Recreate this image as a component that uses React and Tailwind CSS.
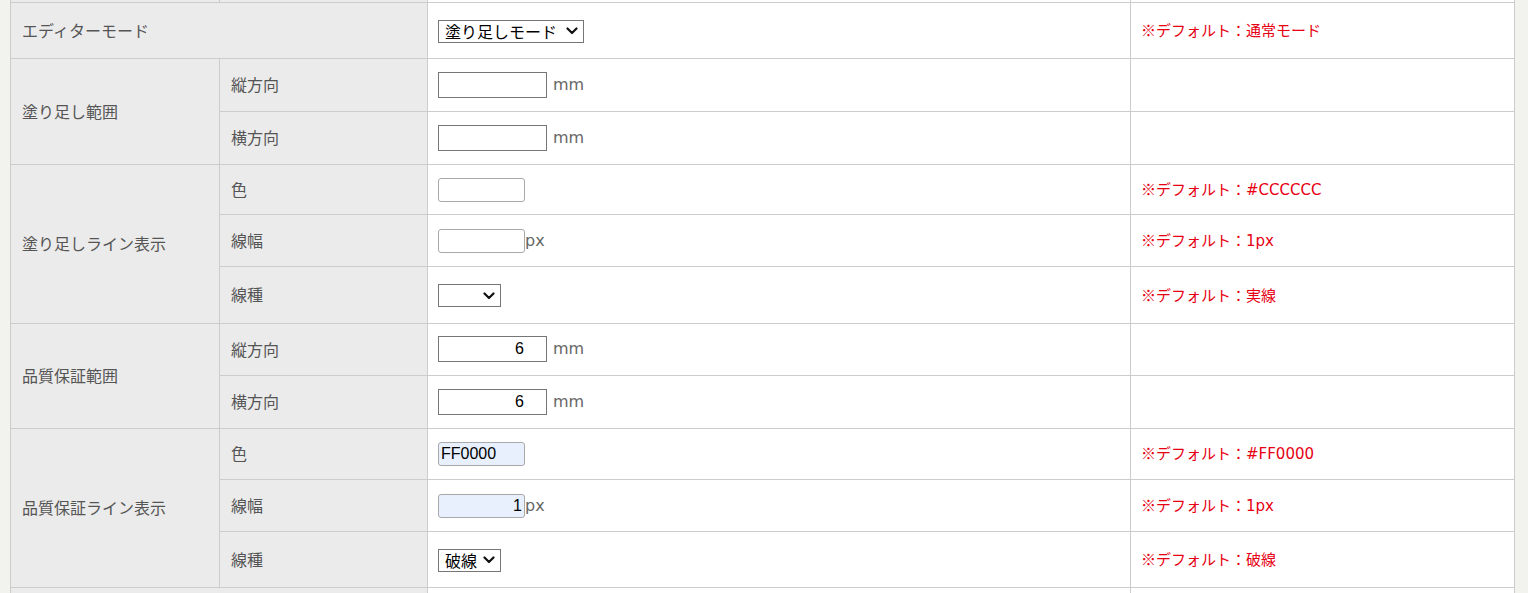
import React from 'react';

const label = 'bg-[#ebebeb] border border-[#cccccc] px-[11px] pb-[2px] text-[16px] text-[#555555] align-middle';
const cell = 'bg-white border border-[#cccccc] pl-[10px] pr-[11px] pb-[2px] align-middle';
const note = 'text-[15px] text-[#e60012]';
const latin = "font-['DejaVu_Sans','Noto_Sans_CJK_JP',sans-serif]";
const arial = "font-['Liberation_Sans',sans-serif]";

const TextBox = ({ value = '', right = false }) => (
  <input
    type="text"
    defaultValue={value}
    className={`w-[109px] h-[26px] border border-[#767676] bg-white text-[16px] text-black px-[3px] align-middle ${arial} ${right ? 'text-right pr-[22px]' : ''}`}
  />
);

const SmallBox = ({ value = '', right = false, filled = false }) => (
  <input
    type="text"
    defaultValue={value}
    className={`w-[87px] h-[24px] border border-[#a9a9a9] rounded-[3px] text-[16px] text-black px-[2px] align-middle ${arial} ${filled ? 'bg-[#e8f0fe]' : 'bg-white'} ${right ? 'text-right' : ''}`}
  />
);

const Chevron = () => (
  <svg width="12" height="8" viewBox="0 0 12 8" className="shrink-0">
    <path d="M1.5 1.5 L6 6 L10.5 1.5" fill="none" stroke="#111111" strokeWidth="2.2" strokeLinecap="round" strokeLinejoin="round" />
  </svg>
);

const Select = ({ value, w }) => (
  <span
    className={`${w} inline-flex items-center justify-between h-[23px] border border-[#767676] bg-white pl-[6px] pr-[5px] text-[16px] leading-[20px] text-black align-middle`}
  >
    <span>{value}</span>
    <Chevron />
  </span>
);

const Unit = ({ children, gap = true }) => (
  <span className={`text-[16px] text-[#666666] align-middle ${latin} ${gap ? 'ml-[6px]' : ''}`}>{children}</span>
);

const Note = ({ value, jp = false }) => (
  <span className={note}>
    ※デフォルト：<span className={jp ? '' : latin}>{value}</span>
  </span>
);

export default function App() {
  return (
    <div className="h-[593px] overflow-hidden bg-[#f2f2ee] pl-[10px] font-['Noto_Sans_CJK_JP',sans-serif]">
      <table className="w-[1504px] border-collapse table-fixed -mt-[30px]">
        <colgroup>
          <col className="w-[209px]" />
          <col className="w-[208px]" />
          <col className="w-[703px]" />
          <col className="w-[384px]" />
        </colgroup>
        <tbody>
          <tr className="h-[32px]">
            <td className={label}></td>
            <td className={label}></td>
            <td className={cell}></td>
            <td className={cell}></td>
          </tr>

          <tr className="h-[56px]">
            <td className={label} colSpan={2}>エディターモード</td>
            <td className={cell}><Select value="塗り足しモード" w="w-[146px]" /></td>
            <td className={cell}><Note value="通常モード" jp /></td>
          </tr>

          <tr className="h-[53px]">
            <td className={label} rowSpan={2}>塗り足し範囲</td>
            <td className={label}>縦方向</td>
            <td className={cell}><TextBox /><Unit>mm</Unit></td>
            <td className={cell}></td>
          </tr>
          <tr className="h-[53px]">
            <td className={label}>横方向</td>
            <td className={cell}><TextBox /><Unit>mm</Unit></td>
            <td className={cell}></td>
          </tr>

          <tr className="h-[50px]">
            <td className={label} rowSpan={3}>塗り足しライン表示</td>
            <td className={label}>色</td>
            <td className={cell}><SmallBox /></td>
            <td className={cell}><Note value="#CCCCCC" /></td>
          </tr>
          <tr className="h-[52px]">
            <td className={label}>線幅</td>
            <td className={cell}><SmallBox /><Unit gap={false}>px</Unit></td>
            <td className={cell}><Note value="1px" /></td>
          </tr>
          <tr className="h-[57px]">
            <td className={label}>線種</td>
            <td className={cell}><Select value="" w="w-[63px]" /></td>
            <td className={cell}><Note value="実線" jp /></td>
          </tr>

          <tr className="h-[52px]">
            <td className={label} rowSpan={2}>品質保証範囲</td>
            <td className={label}>縦方向</td>
            <td className={cell}><TextBox value="6" right /><Unit>mm</Unit></td>
            <td className={cell}></td>
          </tr>
          <tr className="h-[53px]">
            <td className={label}>横方向</td>
            <td className={cell}><TextBox value="6" right /><Unit>mm</Unit></td>
            <td className={cell}></td>
          </tr>

          <tr className="h-[51px]">
            <td className={label} rowSpan={3}>品質保証ライン表示</td>
            <td className={label}>色</td>
            <td className={cell}><SmallBox value="FF0000" filled /></td>
            <td className={cell}><Note value="#FF0000" /></td>
          </tr>
          <tr className="h-[52px]">
            <td className={label}>線幅</td>
            <td className={cell}><SmallBox value="1" right filled /><Unit gap={false}>px</Unit></td>
            <td className={cell}><Note value="1px" /></td>
          </tr>
          <tr className="h-[56px]">
            <td className={label}>線種</td>
            <td className={cell}><Select value="破線" w="w-[63px]" /></td>
            <td className={cell}><Note value="破線" jp /></td>
          </tr>

          <tr className="h-[56px]">
            <td className={label} colSpan={2}></td>
            <td className={cell}></td>
            <td className={cell}></td>
          </tr>
        </tbody>
      </table>
    </div>
  );
}
